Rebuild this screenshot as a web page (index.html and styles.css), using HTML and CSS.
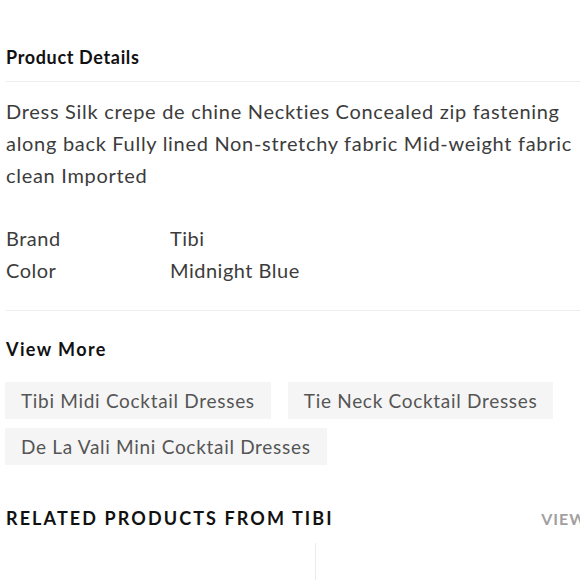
FILE: index.html
```html
<!DOCTYPE html>
<html lang="en">
<head>
<meta charset="utf-8">
<title>Product Details</title>
<link rel="stylesheet" href="styles.css">
</head>
<body>
<main class="page">
  <section class="details">
    <h2 class="section-title">Product Details</h2>
    <div class="details-body">
      <p class="desc"><span class="line">Dress Silk crepe de chine Neckties Concealed zip fastening</span><span class="line">along back Fully lined Non-stretchy fabric Mid-weight fabric</span><span class="line">clean Imported</span></p>
      <dl class="specs">
        <dt>Brand</dt><dd>Tibi</dd>
        <dt>Color</dt><dd>Midnight Blue</dd>
      </dl>
    </div>
  </section>
  <section class="view-more">
    <h2 class="section-title section-title--wide">View More</h2>
    <div class="chips">
      <a class="chip" href="#">Tibi Midi Cocktail Dresses</a>
      <a class="chip" href="#">Tie Neck Cocktail Dresses</a>
      <a class="chip" href="#">De La Vali Mini Cocktail Dresses</a>
    </div>
  </section>
  <section class="related">
    <div class="related-head">
      <h2 class="related-title">RELATED PRODUCTS FROM TIBI</h2>
      <a class="view-all" href="#">VIEW ALL</a>
    </div>
    <div class="products">
      <div class="product"></div>
      <div class="product"></div>
    </div>
  </section>
</main>
</body>
</html>
```
FILE: styles.css
```css
html, body {
  margin: 0;
  padding: 0;
  background: #fff;
  overflow: hidden;
}
body {
  font-family: Lato, "Noto Sans", sans-serif;
  color: #333;
}
.page {
  width: 640px;
  padding-left: 6px;
  padding-top: 45px;
}
.section-title {
  margin: 0;
  font-size: 18px;
  line-height: 24px;
  font-weight: 700;
  letter-spacing: 0.65px;
  color: #111;
}
.section-title--wide {
  letter-spacing: 1.4px;
}
.details .section-title {
  padding-bottom: 12px;
  border-bottom: 1px solid #ededed;
}
.details-body {
  padding-top: 13px;
  padding-bottom: 24px;
  border-bottom: 1px solid #ededed;
}
.desc {
  margin: 0;
  font-size: 20px;
  line-height: 32px;
  letter-spacing: 0.7px;
  color: #3c3c3c;
}
.line {
  display: block;
  white-space: nowrap;
}
.specs {
  margin: 31px 0 0;
  display: grid;
  grid-template-columns: 164px 1fr;
  font-size: 20px;
  line-height: 32px;
  letter-spacing: 0.5px;
  color: #3c3c3c;
}
.specs dt, .specs dd {
  margin: 0;
}
.view-more {
  padding-top: 26px;
}
.chips {
  margin-top: 21px;
  margin-left: -1px;
  display: flex;
  flex-wrap: wrap;
  column-gap: 17px;
  row-gap: 9px;
  width: 570px;
}
.chip {
  display: block;
  background: #f5f5f5;
  color: #555;
  text-decoration: none;
  font-size: 19px;
  line-height: 37px;
  letter-spacing: 0.7px;
  padding: 0 16px;
}
.related {
  padding-top: 41px;
}
.related-head {
  display: flex;
  justify-content: space-between;
  align-items: baseline;
  width: 616px;
}
.related-title {
  margin: 0;
  font-size: 18px;
  line-height: 24px;
  font-weight: 700;
  letter-spacing: 2.1px;
  color: #111;
}
.view-all {
  color: #a0a0a0;
  text-decoration: none;
  font-size: 16px;
  font-weight: 700;
  letter-spacing: 1px;
}
.products {
  margin-top: 13px;
  display: grid;
  grid-template-columns: 309px 309px;
  height: 60px;
}
.product + .product {
  border-left: 1px solid #ececec;
}
```
